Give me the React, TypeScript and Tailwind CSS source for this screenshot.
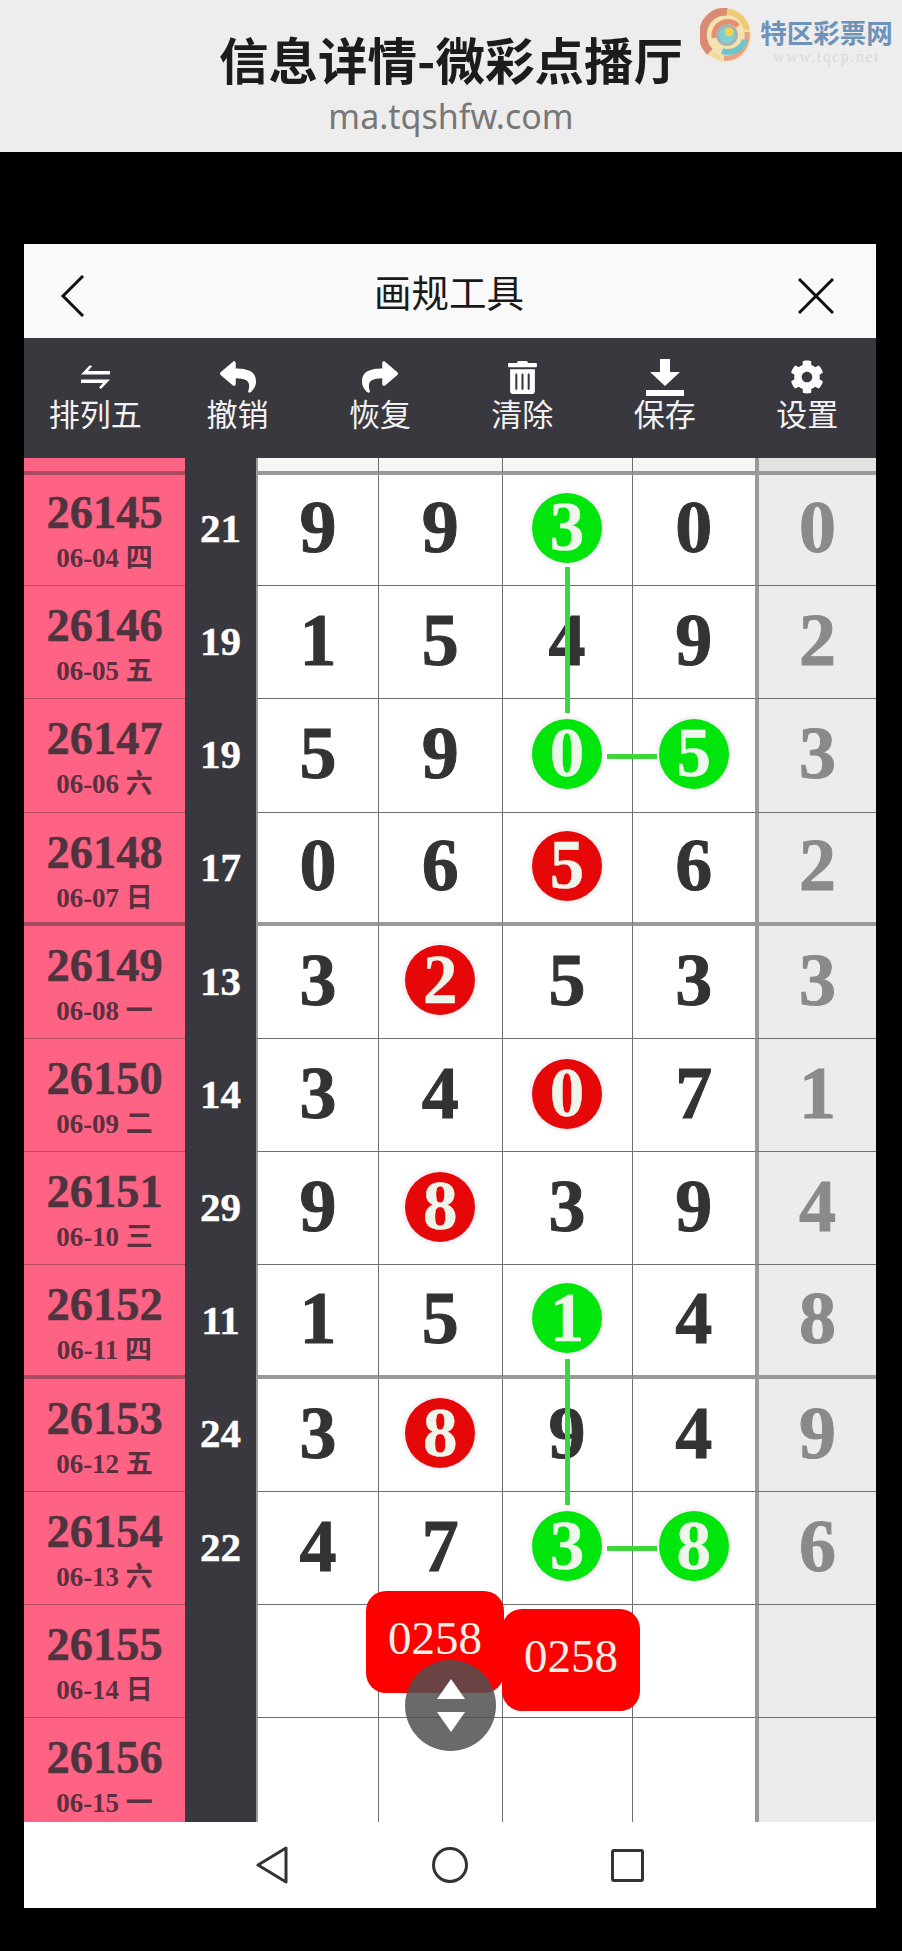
import { FaCog, FaReply, FaShare, FaTrashAlt } from 'react-icons/fa';

type Ball = 'g' | 'r' | undefined;
type Cell = { n: string; ball?: Ball };

type RowData = {
  issue: string;
  date: string;
  sum: string;
  cells: Cell[];
  last: string;
  thick?: boolean;
};

const c = (n: string, ball?: Ball): Cell => ({ n, ball });

const rows: RowData[] = [
  { issue: '26145', date: '06-04 四', sum: '21', cells: [c('9'), c('9'), c('3', 'g'), c('0')], last: '0' },
  { issue: '26146', date: '06-05 五', sum: '19', cells: [c('1'), c('5'), c('4'), c('9')], last: '2' },
  { issue: '26147', date: '06-06 六', sum: '19', cells: [c('5'), c('9'), c('0', 'g'), c('5', 'g')], last: '3' },
  { issue: '26148', date: '06-07 日', sum: '17', cells: [c('0'), c('6'), c('5', 'r'), c('6')], last: '2', thick: true },
  { issue: '26149', date: '06-08 一', sum: '13', cells: [c('3'), c('2', 'r'), c('5'), c('3')], last: '3' },
  { issue: '26150', date: '06-09 二', sum: '14', cells: [c('3'), c('4'), c('0', 'r'), c('7')], last: '1' },
  { issue: '26151', date: '06-10 三', sum: '29', cells: [c('9'), c('8', 'r'), c('3'), c('9')], last: '4' },
  { issue: '26152', date: '06-11 四', sum: '11', cells: [c('1'), c('5'), c('1', 'g'), c('4')], last: '8', thick: true },
  { issue: '26153', date: '06-12 五', sum: '24', cells: [c('3'), c('8', 'r'), c('9'), c('4')], last: '9' },
  { issue: '26154', date: '06-13 六', sum: '22', cells: [c('4'), c('7'), c('3', 'g'), c('8', 'g')], last: '6' },
  { issue: '26155', date: '06-14 日', sum: '', cells: [c(''), c(''), c(''), c('')], last: '' },
  { issue: '26156', date: '06-15 一', sum: '', cells: [c(''), c(''), c(''), c('')], last: '' },
];

const colWidths = ['w-[123px]', 'w-[123.5px]', 'w-[130px]', 'w-[122.5px]'];

function SwapIcon() {
  return (
    <svg width="29" height="24" viewBox="0 0 29 24" fill="white" aria-hidden="true">
      <path d="M9 0 L11 1.5 L7 6 H29 V9.5 H0 Z" />
      <path d="M20 24 L18 22.5 L22 18 H0 V14.5 H29 Z" />
    </svg>
  );
}

function SaveIcon() {
  return (
    <svg width="38" height="37" viewBox="0 0 38 37" fill="white" aria-hidden="true">
      <path d="M14 0 H24 V13 H34 L19 27 L4 13 H14 Z" />
      <rect x="0" y="31" width="38" height="6" />
    </svg>
  );
}

function Logo() {
  return (
    <div className="flex items-start gap-[9px]">
      <svg width="51" height="54" viewBox="0 0 51 54" fill="none" aria-hidden="true">
        <ellipse cx="25.5" cy="27" rx="25.5" ry="27" fill="#f4e3b0" />
        <path d="M27 4 A 21 23 0 0 0 10 44" stroke="#d98c74" strokeWidth="8" />
        <path d="M10 44 A 21 23 0 0 0 22 50" stroke="#f0dc9c" strokeWidth="5" />
        <path d="M27 4 A 21 23 0 0 1 47 22" stroke="#efc97a" strokeWidth="6" />
        <path d="M47 24 A 21 23 0 0 1 24 50" stroke="#e6a284" strokeWidth="5" />
        <path d="M45 32 A 18 18 0 0 1 22 43" stroke="#6ec5cc" strokeWidth="6" />
        <path d="M14 30 A 14 14 0 0 1 38 18" stroke="#e88d6e" strokeWidth="5" />
        <circle cx="27" cy="27" r="11" fill="#a8b0b2" />
        <circle cx="27" cy="27" r="8" fill="#7dd0d6" />
        <circle cx="29" cy="24" r="4.5" fill="#f2cf55" />
      </svg>
      <div className="mt-[10px] flex w-[133px] flex-col items-center">
        <span className="text-[26.5px] leading-[27px] font-bold whitespace-nowrap text-[#6f93b8] [font-family:'Noto_Sans_CJK_SC',sans-serif]">
          特区彩票网
        </span>
        <span className="mt-[5px] text-[16px] leading-[14px] tracking-[1.5px] text-[#d9d9d9] [font-family:'Liberation_Serif',serif]">
          www.tqcp.net
        </span>
      </div>
    </div>
  );
}

function TableRow({ row }: { row: RowData }) {
  const line = row.thick ? 'border-b-4 border-b-[#999999]' : 'border-b border-b-[#6e6e6e]';
  const pinkLine = row.thick ? 'border-b-4 border-b-[#a84a60]' : 'border-b border-b-[#b84a63]';
  return (
    <div className="flex h-[113.2px] shrink-0">
      <div className={`flex w-[161px] shrink-0 flex-col items-center bg-[#ff6384] pt-[17px] text-[#5a3040] ${pinkLine}`}>
        <span className="text-[46.5px] leading-[46px] font-bold text-[#4f3440] [-webkit-text-stroke:0.5px_#4f3440]">{row.issue}</span>
        <span className="mt-[7px] text-[27px] leading-[30px] font-bold">{row.date}</span>
      </div>
      <div className="flex w-[71px] shrink-0 items-center justify-center pb-[2px] text-[41px] font-bold text-white [-webkit-text-stroke:0.4px_white]">
        {row.sum}
      </div>
      {row.cells.map((cell, i) => (
        <div
          key={i}
          className={`flex shrink-0 items-center justify-center bg-white pb-[3px] text-[74px] font-bold text-[#333333] [-webkit-text-stroke:1px_#333333] ${i === 3 ? '' : 'border-r border-r-[#6e6e6e]'} ${i === 0 ? 'border-l-2 border-l-[#999999]' : ''} ${colWidths[i]} ${line}`}
        >
          {cell.ball ? (
            <span
              className={`flex h-[70px] w-[70px] items-center justify-center rounded-full text-[69px] leading-none font-bold text-[#eef5ea] shadow-[0_0_3px_3px_#f5f1f5] [-webkit-text-stroke:0.5px_#eef5ea] ${cell.ball === 'g' ? 'bg-[#00e60c]' : 'bg-[#e60808]'}`}
            >
              {cell.n}
            </span>
          ) : (
            cell.n
          )}
        </div>
      ))}
      <div className={`flex flex-1 items-center justify-center border-l-4 border-l-[#999999] bg-[#ececec] pb-[3px] text-[74px] font-bold text-[#8a8a8a] [-webkit-text-stroke:1px_#8a8a8a] ${line}`}>
        {row.last}
      </div>
    </div>
  );
}

export default function App() {
  const tools = [
    { label: '排列五', icon: <SwapIcon /> },
    { label: '撤销', icon: <FaReply size={36} color="white" /> },
    { label: '恢复', icon: <FaShare size={36} color="white" /> },
    { label: '清除', icon: <FaTrashAlt size={33} color="white" /> },
    { label: '保存', icon: <SaveIcon /> },
    { label: '设置', icon: <FaCog size={34} color="white" /> },
  ];

  return (
    <div className="h-[1951px] w-[902px] bg-black [font-family:'Noto_Sans_CJK_SC',sans-serif]">
      <header className="relative flex h-[152px] flex-col items-center bg-[#ededed] pt-[27px]">
        <h1 className="text-[49.5px] leading-[64px] font-bold text-[#1c1c1c]">信息详情-微彩点播厅</h1>
        <p className="mt-[2px] text-[34px] leading-[46px] text-[#777777] [font-family:'Noto_Sans',sans-serif]">ma.tqshfw.com</p>
        <div className="absolute top-[8px] left-[700px]">
          <Logo />
        </div>
      </header>

      <main className="mx-[24px] mt-[92px] flex w-[852px] flex-col">
        <div className="flex h-[94px] items-center bg-[#f9f9f9] pr-[42px] pl-[36px]">
          <div className="flex-1 pt-[9px]">
            <svg width="25" height="42" viewBox="0 0 25 42" fill="none" stroke="#111111" strokeWidth="3" aria-hidden="true">
              <path d="M23 1 L3 21 L23 41" />
            </svg>
          </div>
          <span className="pl-[4px] text-[37.5px] leading-[50px] text-[#1a1a1a]">画规工具</span>
          <div className="flex flex-1 justify-end pt-[9px]">
            <svg width="36" height="36" viewBox="0 0 36 36" fill="none" stroke="#111111" strokeWidth="3" aria-hidden="true">
              <path d="M1 1 L35 35 M35 1 L1 35" />
            </svg>
          </div>
        </div>

        <div className="flex h-[120px] bg-[#38383e] pt-[20px]">
          {tools.map((t) => (
            <div key={t.label} className="flex w-[142.4px] shrink-0 flex-col items-center">
              <div className="flex h-[38px] items-center justify-center">{t.icon}</div>
              <span className="-mt-[4px] text-[31px] leading-[42px] text-[#f2f2f2]">{t.label}</span>
            </div>
          ))}
        </div>

        <div className="relative h-[1364px] overflow-hidden bg-[#38383e] [font-family:'Liberation_Serif','Noto_Sans_CJK_SC',serif]">
          <div className="relative z-10 flex h-[17px]">
            <div className="w-[161px] border-b-4 border-b-[#a84a60] bg-[#ff6384]" />
            <div className="w-[71px]" />
            {colWidths.map((w, i) => (
              <div
                key={w}
                className={`border-b-4 border-b-[#999999] bg-[#f6f6f6] ${i === 3 ? '' : 'border-r border-r-[#6e6e6e]'} ${i === 0 ? 'border-l-2 border-l-[#999999]' : ''} ${w}`}
              />
            ))}
            <div className="flex-1 border-b-4 border-l-4 border-b-[#999999] border-l-[#999999] bg-[#e2e2e2]" />
          </div>
          <div className="-mt-[2px] flex h-[1349px] flex-col overflow-hidden">
            {rows.map((r) => (
              <TableRow key={r.issue} row={r} />
            ))}
          </div>

          {/* connecting lines between the picked balls */}
          <div className="absolute top-[109px] left-[541px] h-[146px] w-[5px] bg-[#3dd63d]" />
          <div className="absolute top-[296px] left-[583px] h-[5px] w-[50px] bg-[#3dd63d]" />
          <div className="absolute top-[901px] left-[541px] h-[146px] w-[5px] bg-[#3dd63d]" />
          <div className="absolute top-[1088px] left-[583px] h-[5px] w-[50px] bg-[#3dd63d]" />

          <div className="absolute top-[1133px] left-[342px] flex h-[102px] w-[138px] items-center justify-center rounded-[20px] bg-[#ff0000] pb-[8px] text-[47px] text-[#f5f0e8]">
            0258
          </div>
          <div className="absolute top-[1151px] left-[478px] flex h-[102px] w-[138px] items-center justify-center rounded-[20px] bg-[#ff0000] pb-[8px] text-[47px] text-[#f5f0e8]">
            0258
          </div>
          <div className="absolute top-[1202px] left-[381px] flex h-[91px] w-[91px] flex-col items-center justify-center gap-[13px] rounded-full bg-[#505050]/85">
            <svg width="28" height="20" viewBox="0 0 28 20" fill="white" aria-hidden="true">
              <path d="M14 0 L28 20 H0 Z" />
            </svg>
            <svg width="28" height="20" viewBox="0 0 28 20" fill="white" aria-hidden="true">
              <path d="M0 0 H28 L14 20 Z" />
            </svg>
          </div>
        </div>

        <div className="flex h-[86px] items-center bg-white pl-[232px]">
          <svg width="32" height="38" viewBox="0 0 32 38" fill="none" stroke="#333333" strokeWidth="3" strokeLinejoin="round" aria-hidden="true">
            <path d="M30 2 V36 L2 19 Z" />
          </svg>
          <svg className="ml-[144px]" width="36" height="36" viewBox="0 0 36 36" fill="none" stroke="#333333" strokeWidth="3" aria-hidden="true">
            <circle cx="18" cy="18" r="16.5" />
          </svg>
          <svg className="ml-[143px]" width="33" height="33" viewBox="0 0 33 33" fill="none" stroke="#333333" strokeWidth="3" strokeLinejoin="round" aria-hidden="true">
            <rect x="1.5" y="1.5" width="30" height="30" rx="1.5" />
          </svg>
        </div>
      </main>
    </div>
  );
}
